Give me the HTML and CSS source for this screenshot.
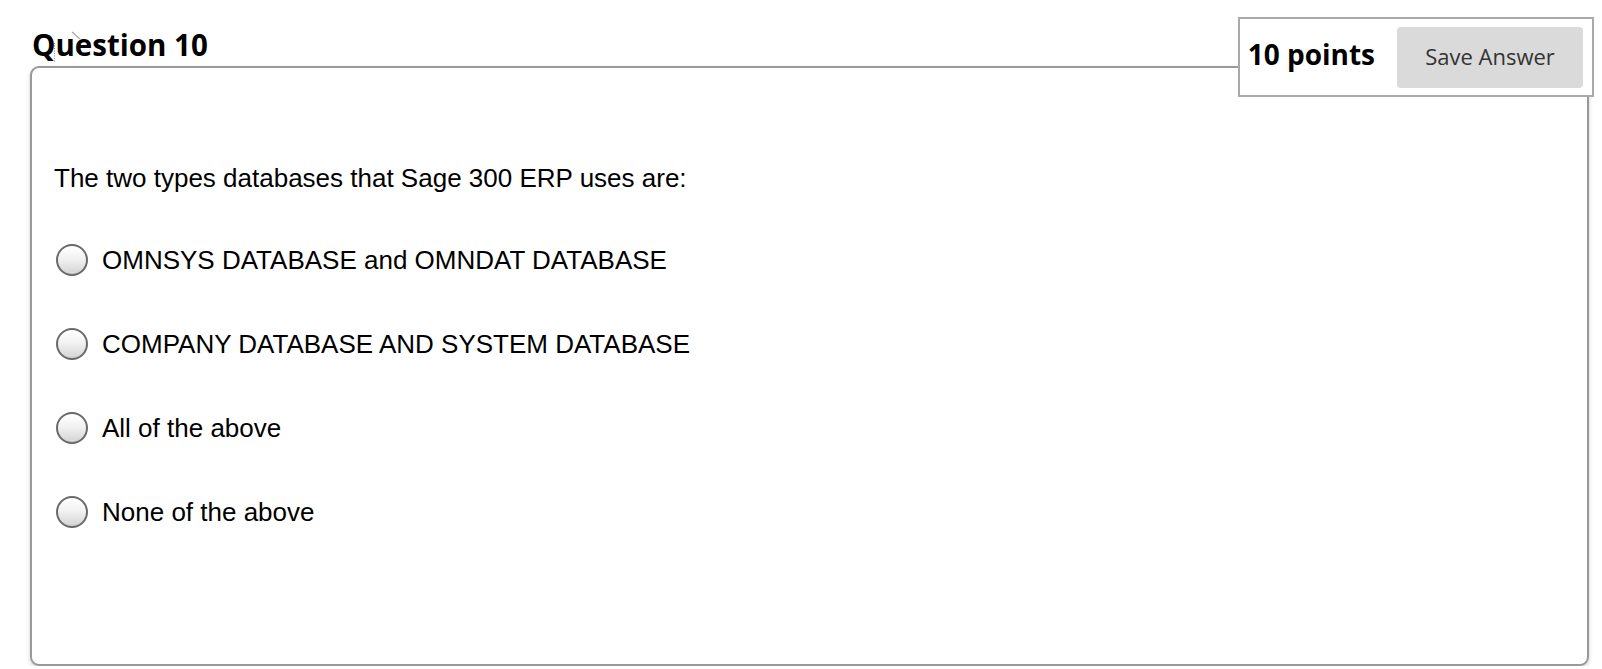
FILE: index.html
```html
<!DOCTYPE html>
<html>
<head>
<meta charset="utf-8">
<link rel="stylesheet" href="styles.css">
</head>
<body>
<div class="page">
  <div class="header">
    <h2 class="title">Question 10</h2>
    <div class="points">
      <span class="points-label">10 points</span>
      <button class="save">Save Answer</button>
    </div>
  </div>
  <div class="card">
    <p class="question">The two types databases that Sage 300 ERP uses are:</p>
    <ul class="options">
      <li class="option"><span class="radio"></span><span class="label">OMNSYS DATABASE and OMNDAT DATABASE</span></li>
      <li class="option"><span class="radio"></span><span class="label">COMPANY DATABASE AND SYSTEM DATABASE</span></li>
      <li class="option"><span class="radio"></span><span class="label">All of the above</span></li>
      <li class="option"><span class="radio"></span><span class="label">None of the above</span></li>
    </ul>
  </div>
  <svg class="artifact" width="40" height="40" viewBox="0 0 40 40">
    <line x1="22" y1="2" x2="30" y2="9" stroke="#a8a8a8" stroke-width="1.2"/>
    <line x1="4.5" y1="13" x2="4.5" y2="32" stroke="#8a8a8a" stroke-width="1" stroke-dasharray="1 1.5"/>
  </svg>
</div>
</body>
</html>
```

FILE: styles.css
```css
html, body {
  margin: 0;
  padding: 0;
  background: #ffffff;
}

.page {
  position: relative;
  padding: 17px 8px 0 30px;
}

.header {
  display: flex;
  justify-content: space-between;
  align-items: flex-start;
  height: 49px;
}

.title {
  margin: 13px 0 0 2px;
  font-family: "Open Sans", sans-serif;
  font-weight: 700;
  font-size: 29.5px;
  line-height: 30px;
  color: #000;
}

.points {
  position: relative;
  z-index: 2;
  box-sizing: border-box;
  height: 80px;
  display: flex;
  align-items: flex-start;
  gap: 22px;
  padding: 0 9px 0 8px;
  background: #fff;
  border: 2px solid #a9a9a9;
}

.points-label {
  margin-top: 21px;
  font-family: "Open Sans", sans-serif;
  font-weight: 700;
  font-size: 28px;
  line-height: 28px;
  color: #000;
  white-space: nowrap;
}

.save {
  margin-top: 8px;
  width: 186px;
  height: 61px;
  border: none;
  border-radius: 4px;
  background: #dadada;
  font-family: "Open Sans", sans-serif;
  font-size: 22px;
  color: #333;
  padding: 0 0 3px 0;
}

.card {
  box-sizing: border-box;
  width: 1559px;
  height: 600px;
  border: 2px solid #999;
  border-radius: 9px;
  box-shadow: 0 2px 4px rgba(0, 0, 0, 0.18);
  padding: 95px 22px 0 22px;
  background: #fff;
}

.question {
  margin: 0;
  font-family: "Liberation Sans", Arial, sans-serif;
  font-size: 26px;
  line-height: 30px;
  color: #000;
}

.options {
  list-style: none;
  margin: 52px 0 0 0;
  padding: 0;
  display: flex;
  flex-direction: column;
  gap: 54px;
}

.option {
  display: flex;
  align-items: center;
  gap: 14px;
  height: 30px;
}

.radio {
  box-sizing: border-box;
  margin-left: 2px;
  width: 32px;
  height: 32px;
  border-radius: 50%;
  border: 2px solid #6a6a6a;
  background: linear-gradient(#ffffff 0%, #f2f2f2 45%, #d4d4d4 100%);
  flex: none;
}

.label {
  font-family: "Liberation Sans", Arial, sans-serif;
  font-size: 26px;
  line-height: 30px;
  color: #000;
}

.artifact {
  position: absolute;
  left: 50px;
  top: 30px;
}
```
